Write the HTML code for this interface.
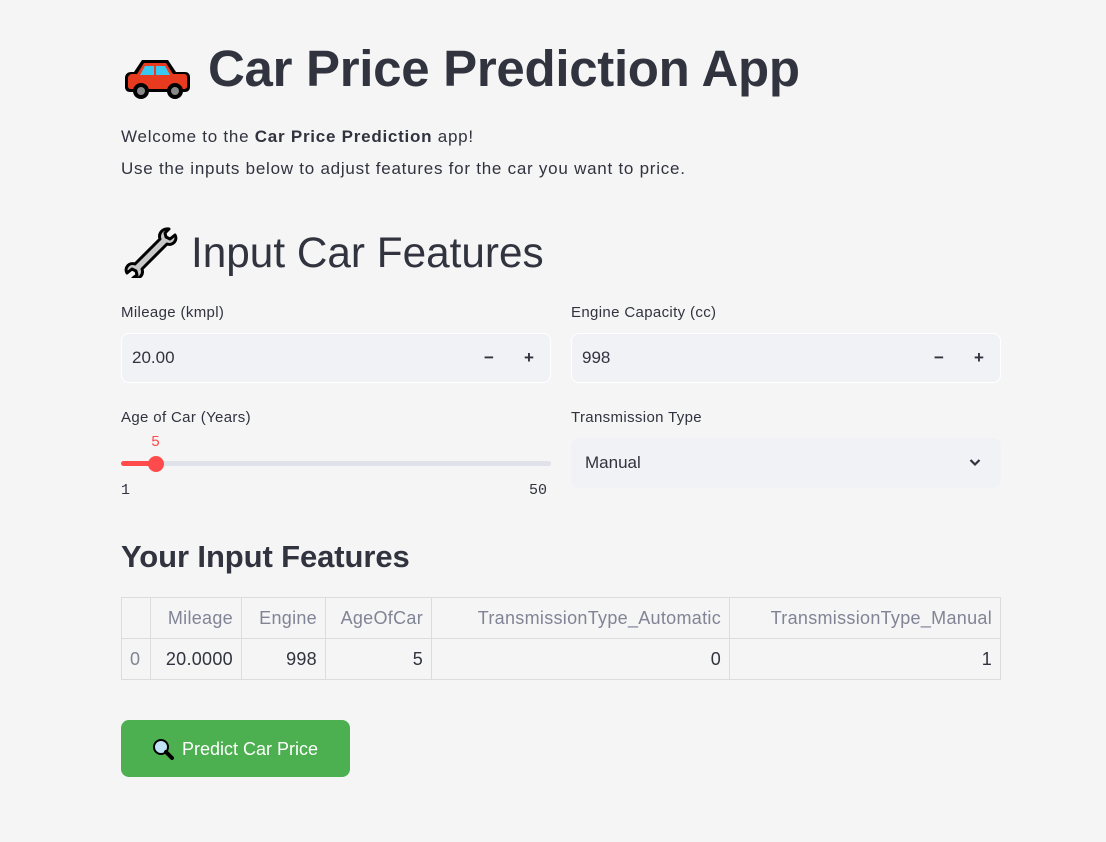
<!DOCTYPE html>
<html><head><meta charset="utf-8"><style>
*{margin:0;padding:0;box-sizing:border-box}
body{width:1106px;height:842px;background:#f5f5f5;font-family:"Liberation Sans",sans-serif;color:#31333f;position:relative;overflow:hidden}
.a{position:absolute;white-space:nowrap}
.lbl{font-size:15px;color:#31333f;letter-spacing:0.35px}
.inp{position:absolute;background:#f0f2f6;border:1px solid #fff;border-radius:8px;height:50px}
.inp span{position:absolute;top:14px;font-size:17px}
table{position:absolute;left:121px;top:597px;width:880px;border-collapse:collapse;font-size:18px;letter-spacing:0.3px}
td{border:1px solid #dcdcdc;text-align:right;padding:0 8px;height:41px}
tr:first-child td{color:#808495}
</style></head><body>
<svg class="a" style="left:125px;top:58px" width="66" height="42" viewBox="0 0 66 42">
<path d="M17 2h26l8 12h9c3 0 5 2 5 5v10c0 3-2 5-5 5H5c-3 0-5-2-5-5v-9c0-4 3-6 6-6h3z" fill="#000"/>
<path d="M19 5h22l7 11h11c2 0 3 1 3 3v9c0 2-1 3-3 3H6c-2 0-3-1-3-3v-8c0-2 2-4 4-4h5z" fill="#e83a1e"/>
<path d="M20 8h9v9h-14zM31 8h9l5 9h-14z" fill="#38c8f0"/>
<circle cx="16" cy="33" r="8" fill="#000"/><circle cx="16" cy="33" r="4" fill="#888"/>
<circle cx="50" cy="33" r="8" fill="#000"/><circle cx="50" cy="33" r="4" fill="#888"/>
</svg>
<div class="a" style="left:208px;top:39px;font-size:51px;font-weight:bold;letter-spacing:-0.3px">Car Price Prediction App</div>
<div class="a" style="left:121px;top:127px;font-size:17px;letter-spacing:0.75px">Welcome to the <b>Car Price Prediction</b> app!</div>
<div class="a" style="left:121px;top:159px;font-size:17px;letter-spacing:0.75px">Use the inputs below to adjust features for the car you want to price.</div>
<svg class="a" style="left:124px;top:226px" width="54" height="52" viewBox="0 0 54 52">
<path d="M45 3c-6-1-11 4-9 10L11 38c-6-2-11 4-8 9l5-4 4 2 1 4-4 3c6 2 11-3 9-9l25-25c6 2 11-4 8-9l-5 4-4-2-1-4z" fill="#c8c8c8" stroke="#000" stroke-width="3" stroke-linejoin="round"/>
</svg>
<div class="a" style="left:191px;top:229px;font-size:42.3px">Input Car Features</div>
<div class="a lbl" style="left:121px;top:304px">Mileage (kmpl)</div>
<div class="inp" style="left:121px;top:333px;width:430px"><span style="left:10px">20.00</span><span style="left:362px;font-weight:bold">−</span><span style="left:402px;font-weight:bold">+</span></div>
<div class="a lbl" style="left:571px;top:304px">Engine Capacity (cc)</div>
<div class="inp" style="left:571px;top:333px;width:430px"><span style="left:10px">998</span><span style="left:362px;font-weight:bold">−</span><span style="left:402px;font-weight:bold">+</span></div>
<div class="a lbl" style="left:121px;top:409px">Age of Car (Years)</div>
<div class="a" style="left:151px;top:434px;font-size:15px;color:#ff4b4b;font-family:'Liberation Mono',monospace">5</div>
<div class="a" style="left:121px;top:461px;width:430px;height:5px;border-radius:3px;background:#dfe2e8"></div>
<div class="a" style="left:121px;top:461px;width:35px;height:5px;border-radius:3px;background:#ff4b4b"></div>
<div class="a" style="left:148px;top:456px;width:16px;height:16px;border-radius:50%;background:#ff4b4b"></div>
<div class="a" style="left:121px;top:482px;font-size:15px;font-family:'Liberation Mono',monospace">1</div>
<div class="a" style="left:529px;top:482px;font-size:15px;font-family:'Liberation Mono',monospace">50</div>
<div class="a lbl" style="left:571px;top:409px">Transmission Type</div>
<div class="inp" style="left:571px;top:438px;width:430px;border:none"><span style="left:14px;top:15px">Manual</span>
<svg style="position:absolute;left:398px;top:20px" width="12" height="10" viewBox="0 0 12 10"><path d="M1.5 2l4.5 4.5 4.5-4.5" fill="none" stroke="#31333f" stroke-width="2.2"/></svg></div>
<div class="a" style="left:121px;top:539px;font-size:31px;font-weight:bold;letter-spacing:-0.1px">Your Input Features</div>
<table>
<tr><td style="width:29px"></td><td style="width:91px">Mileage</td><td style="width:84px">Engine</td><td style="width:106px">AgeOfCar</td><td style="width:298px">TransmissionType_Automatic</td><td>TransmissionType_Manual</td></tr>
<tr><td style="text-align:left;color:#808495">0</td><td>20.0000</td><td>998</td><td>5</td><td>0</td><td>1</td></tr>
</table>
<div class="a" style="left:121px;top:720px;width:229px;height:57px;background:#4caf50;border-radius:8px"></div>
<svg class="a" style="left:152px;top:738px" width="22" height="22" viewBox="0 0 22 22"><circle cx="9" cy="9" r="7" fill="#bfe3f5" stroke="#000" stroke-width="2"/><path d="M14 14l6 6" stroke="#000" stroke-width="4" stroke-linecap="round"/></svg>
<div class="a" style="left:182px;top:739px;font-size:18px;color:#fff">Predict Car Price</div>
</body></html>
